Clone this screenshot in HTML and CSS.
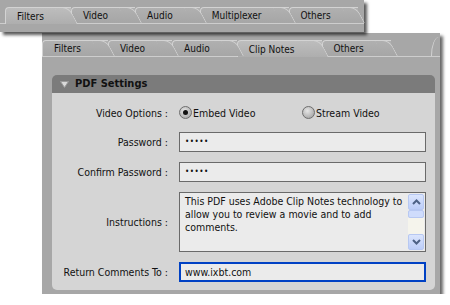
FILE: index.html
```html
<!DOCTYPE html>
<html lang="en">
<head>
    <meta charset="UTF-8">
    <title>Clip Notes</title>
    <link rel="stylesheet" href="styles.css">
</head>
<body>

    <div class="win win-top">
        <div class="tabs">
            <span class="tab active">Filters</span>
            <span class="tab">Video</span>
            <span class="tab">Audio</span>
            <span class="tab">Multiplexer</span>
            <span class="tab">Others</span>
        </div>
    </div>

    <div class="win win-main">
        <div class="tabs">
            <span class="tab">Filters</span>
            <span class="tab">Video</span>
            <span class="tab">Audio</span>
            <span class="tab active">Clip Notes</span>
            <span class="tab">Others</span>
        </div>

        <div class="group">
            <div class="group-head">
                <svg class="twisty" width="9" height="7" viewBox="0 0 9 7"><path d="M0.5 0.5 H8.5 L4.5 6.5 Z" fill="#d9d9d9" stroke="#9a9a9a"/></svg>
                PDF Settings
            </div>
            <div class="group-body">
                <div class="row row-radio">
                    <span class="label">Video Options :</span>
                    <label class="radio checked"><span class="dot"></span>Embed Video</label>
                    <label class="radio radio-2"><span class="dot"></span>Stream Video</label>
                </div>
                <div class="row">
                    <span class="label">Password :</span>
                    <div class="field pass">&#8226;&#8226;&#8226;&#8226;&#8226;</div>
                </div>
                <div class="row">
                    <span class="label">Confirm Password :</span>
                    <div class="field pass">&#8226;&#8226;&#8226;&#8226;&#8226;</div>
                </div>
                <div class="row row-area">
                    <span class="label">Instructions :</span>
                    <div class="field area">
                        <div class="area-text">This PDF uses Adobe Clip Notes technology to allow you to review a movie and to add comments.</div>
                        <div class="scroll">
                            <div class="sbtn"><svg width="9" height="6" viewBox="0 0 9 6"><path d="M1 5 L4.5 1.5 L8 5" fill="none" stroke="#4d6185" stroke-width="2"/></svg></div>
                            <div class="thumb"></div>
                            <div class="track"></div>
                            <div class="sbtn"><svg width="9" height="6" viewBox="0 0 9 6"><path d="M1 1 L4.5 4.5 L8 1" fill="none" stroke="#4d6185" stroke-width="2"/></svg></div>
                        </div>
                    </div>
                </div>
                <div class="row">
                    <span class="label">Return Comments To :</span>
                    <div class="field focus">www.ixbt.com</div>
                </div>
            </div>
        </div>
    </div>

</body>
</html>
```

FILE: styles.css
```css
body {
    margin: 0;
    background: #fff;
    font-family: "DejaVu Sans Condensed", "DejaVu Sans", sans-serif;
    font-size: 10px;
    color: #111;
}

.win {
    background: #a7a7a7;
    position: relative;
}
.win-top {
    width: 364px;
    height: 32px;
    padding-top: 7px;
    box-sizing: border-box;
    box-shadow: 3px 3px 3px rgba(0, 0, 0, 0.65);
    z-index: 2;
}
.win-main {
    width: 398px;
    height: 261px;
    margin: 1px 0 0 42px;
    padding-top: 7px;
    box-sizing: border-box;
    box-shadow: 3px 3px 3px rgba(0, 0, 0, 0.6);
}
.win-main::after {
    content: "";
    position: absolute;
    top: 4px;
    right: 0;
    width: 8px;
    height: 19px;
    border-left: 1px solid #d3d3d3;
    border-top-left-radius: 8px 100%;
}

/* tab strip */
.tabs {
    display: flex;
    height: 16px;
    border-bottom: 1px solid #cdcdcd;
}
.win-top .tabs {
    padding-left: 5px;
}
.tab {
    position: relative;
    height: 16px;
    line-height: 16px;
    padding: 0 27px 0 11px;
    box-sizing: border-box;
    background: linear-gradient(#b0b0b0, #a6a6a6);
    border-top: 1px solid #d3d3d3;
    border-left: 1px solid #d3d3d3;
    border-top-left-radius: 4px;
}
.tab::after {
    content: "";
    position: absolute;
    z-index: 1;
    top: -1px;
    bottom: 0;
    right: -7px;
    width: 14px;
    background: inherit;
    border-top: 1px solid #d3d3d3;
    border-right: 1px solid #d3d3d3;
    border-top-right-radius: 7px;
    transform-origin: bottom left;
    transform: skewX(28deg);
}
.tab.active {
    height: 17px;
    margin-bottom: -1px;
    padding-top: 1px;
    background: linear-gradient(#bdbdbd, #aeaeae);
}
.tab.active::after {
    z-index: 2;
}

/* settings group */
.group {
    margin: 18px 5px 0 10px;
}
.group-head {
    height: 18px;
    line-height: 18px;
    background: #7b7b7b;
    border-radius: 5px 5px 0 0;
    font-weight: bold;
    font-size: 11px;
    padding-left: 8px;
    display: flex;
    align-items: center;
    gap: 6px;
}
.group-body {
    background: #d5d5d5;
    border-radius: 0 0 5px 5px;
    padding: 10px 9px 8px 0;
    display: flex;
    flex-direction: column;
    gap: 10px;
    font-size: 10.5px;
}

.row {
    display: flex;
    align-items: center;
    height: 20px;
}
.row-radio {
    height: 19px;
}
.row-area {
    height: 60px;
}
.label {
    width: 116px;
    margin-right: 11px;
    text-align: right;
    flex: none;
}

.radio {
    display: flex;
    align-items: center;
    width: 123px;
}
.dot {
    width: 11px;
    height: 11px;
    border: 1px solid #6e6e6e;
    border-radius: 50%;
    background: radial-gradient(circle at 40% 35%, #e6e6e6, #9a9a9a);
    margin-right: 1px;
    position: relative;
}
.checked .dot::after {
    content: "";
    position: absolute;
    left: 3px;
    top: 3px;
    width: 5px;
    height: 5px;
    border-radius: 50%;
    background: #111;
}

.field {
    width: 247px;
    height: 20px;
    box-sizing: border-box;
    background: #ebebeb;
    border: 1px solid #6a6a6a;
    padding-left: 5px;
    line-height: 18px;
}
.pass {
    font-size: 8px;
    letter-spacing: 0.5px;
}
.focus {
    border: 2px solid #0041c4;
    line-height: 16px;
    padding-left: 4px;
}
.area {
    height: 60px;
    display: flex;
    padding: 0 1px 0 5px;
}
.area-text {
    flex: 1;
    line-height: 13px;
    padding-top: 2px;
}
.scroll {
    width: 16px;
    display: flex;
    flex-direction: column;
    padding: 1px 0;
}
.sbtn {
    height: 16px;
    box-sizing: border-box;
    border: 1px solid #b7c8f2;
    border-radius: 2px;
    background: linear-gradient(#dbe5fd, #bccdf8);
    display: flex;
    align-items: center;
    justify-content: center;
}
.thumb {
    height: 8px;
    box-sizing: border-box;
    border: 1px solid #b7c8f2;
    border-radius: 2px;
    background: #cfdcfc;
}
.track {
    flex: 1;
    background: #f5f4ec;
}
```
